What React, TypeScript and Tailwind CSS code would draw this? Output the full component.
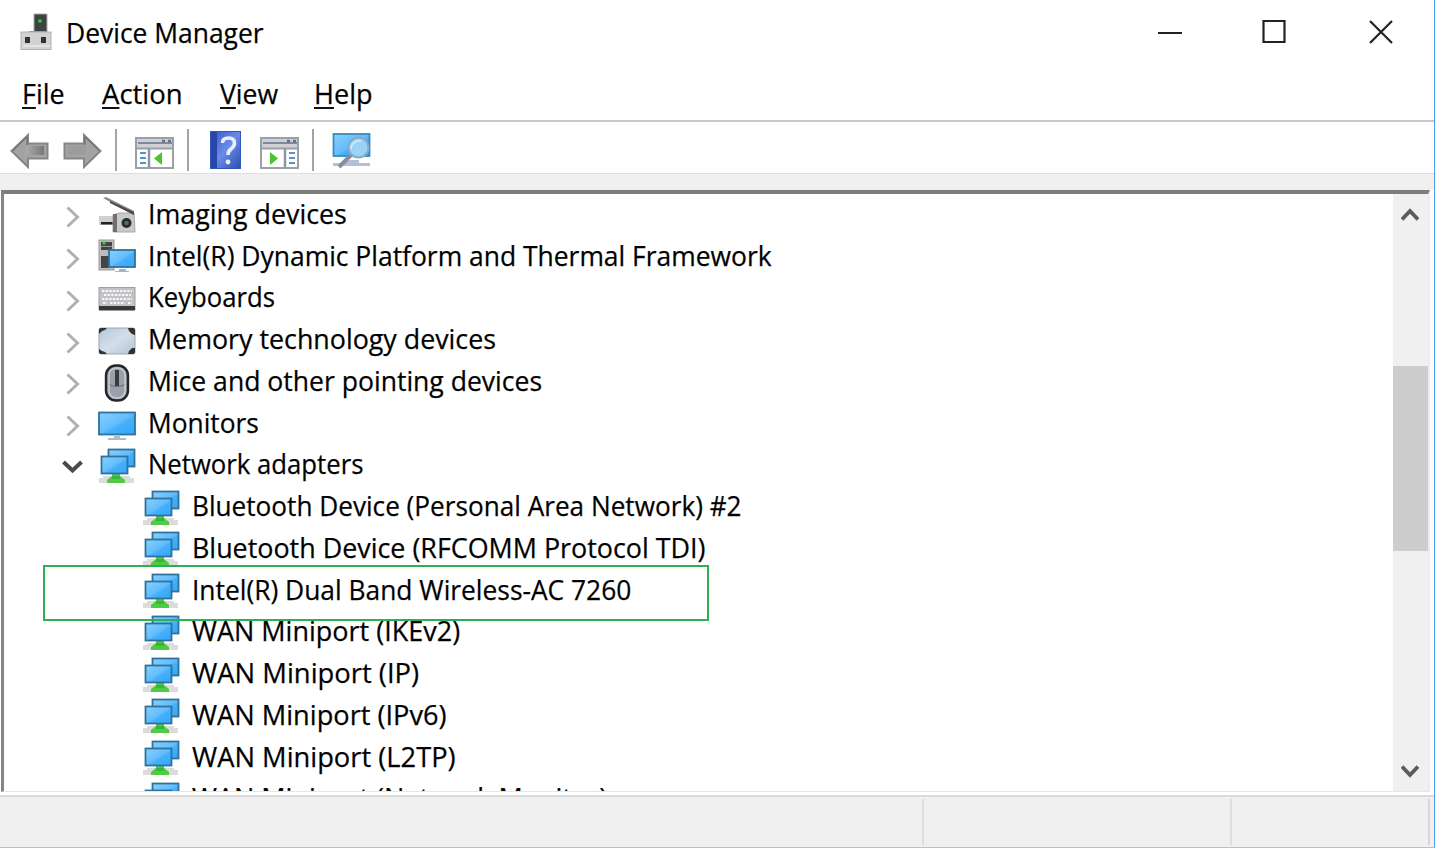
import { useLayoutEffect, useRef, useState } from 'react'
import type { ReactNode } from 'react'
import { clsx } from 'clsx'

type IconName = 'imaging' | 'platform' | 'keyboard' | 'memory' | 'mouse' | 'monitor' | 'network'

type Device = {
  label: string
  width: number
  icon: IconName
  child?: boolean
  open?: boolean
  marked?: boolean
}

const devices: Device[] = [
  { label: 'Imaging devices', width: 199, icon: 'imaging' },
  { label: 'Intel(R) Dynamic Platform and Thermal Framework', width: 624, icon: 'platform' },
  { label: 'Keyboards', width: 127, icon: 'keyboard' },
  { label: 'Memory technology devices', width: 348, icon: 'memory' },
  { label: 'Mice and other pointing devices', width: 394, icon: 'mouse' },
  { label: 'Monitors', width: 111, icon: 'monitor' },
  { label: 'Network adapters', width: 215, icon: 'network', open: true },
  { label: 'Bluetooth Device (Personal Area Network) #2', width: 550, icon: 'network', child: true },
  { label: 'Bluetooth Device (RFCOMM Protocol TDI)', width: 514, icon: 'network', child: true },
  { label: 'Intel(R) Dual Band Wireless-AC 7260', width: 439, icon: 'network', child: true, marked: true },
  { label: 'WAN Miniport (IKEv2)', width: 268, icon: 'network', child: true },
  { label: 'WAN Miniport (IP)', width: 227, icon: 'network', child: true },
  { label: 'WAN Miniport (IPv6)', width: 255, icon: 'network', child: true },
  { label: 'WAN Miniport (L2TP)', width: 264, icon: 'network', child: true },
  { label: 'WAN Miniport (Network Monitor)', width: 415, icon: 'network', child: true },
]

const menus = [
  { label: 'File', width: 43, gap: 'mr-[37px]' },
  { label: 'Action', width: 81, gap: 'mr-[37px]' },
  { label: 'View', width: 58, gap: 'mr-[36px]' },
  { label: 'Help', width: 59, gap: '' },
]

// Squeezes its text horizontally so that it takes exactly `width` pixels
function Label({ width, children }: { width: number; children: ReactNode }) {
  const ref = useRef<HTMLSpanElement>(null)
  const [scale, setScale] = useState(1)

  useLayoutEffect(() => {
    if (ref.current) setScale(width / ref.current.offsetWidth)
  }, [width])

  return (
    <span className="block shrink-0 whitespace-nowrap" style={{ width }}>
      <span ref={ref} className="inline-block origin-left" style={{ transform: `scaleX(${scale})` }}>
        {children}
      </span>
    </span>
  )
}

function NetworkIcon() {
  return (
    <>
      <path d="M1 30h35v5H1zM5 28h27v2H5z" fill="#dcdcdc" />
      <path d="M9 35v-3l5-4v-3h8v3l5 4v3z" fill="#4fcb43" />
      <path d="M14 28h8v3h-8z" fill="#38b53c" />
      <rect x="10.5" y="1.5" width="26" height="17" fill="url(#screen)" stroke="#2f729b" strokeWidth="1.8" />
      <rect x="3.5" y="8.5" width="26" height="17" fill="url(#screen)" stroke="#2f729b" strokeWidth="1.8" />
    </>
  )
}

function DeviceIcon({ name }: { name: IconName }) {
  return (
    <svg className="mt-[1px] h-[38px] w-[38px] shrink-0" viewBox="0 0 38 38">
      {name === 'imaging' && (
        <>
          <path d="M1 19h15v9H1z" fill="#d0d0d0" />
          <path d="M3 25h12v2.5H3z" fill="#222" />
          <path d="M15 18l6-2h15l1 19H15z" fill="#c9c9c9" stroke="#aaa" />
          <path d="M15 17h4v18h-4z" fill="#707070" />
          <path d="M5 1l3-1 28 14v4z" fill="#8a8a8a" />
          <path d="M12 4l24 11v3L12 6z" fill="#4a4a4a" />
          <circle cx="28.5" cy="26" r="5" fill="#2b2b2b" />
          <circle cx="28.5" cy="26" r="2.2" fill="#3d7573" />
        </>
      )}
      {name === 'platform' && (
        <>
          <rect x="1" y="1" width="15" height="30" fill="#bcbcbc" stroke="#999" />
          <path d="M3 3h11v8H3zM3 17h8v12H3z" fill="#444" />
          <path d="M3 7h11v1H3z" fill="#999" />
          <circle cx="6" cy="4" r="1.7" fill="#34cc43" />
          <rect x="11" y="11" width="26" height="17" fill="url(#screen)" stroke="#2f729b" strokeWidth="1.8" />
          <path d="M21 30h7v2h3v1H17v-1h4z" fill="#9ab8d5" />
        </>
      )}
      {name === 'keyboard' && (
        <>
          <rect x="1" y="6.5" width="36" height="22" fill="#c0c2c5" stroke="#a0a0a0" />
          <path d="M1 25h36v4.500H1z" fill="#383838" />
          <path
            d="M4 10h30M6 14h27M4 18h30M5 22h4m3 0h15m3 0h4"
            stroke="#f7f7f7"
            strokeWidth="2.2"
            strokeDasharray="2.4 1.2"
          />
        </>
      )}
      {name === 'memory' && (
        <>
          <rect x="1" y="5" width="36" height="26" rx="2" fill="url(#chip)" stroke="#9aa7b5" />
          <path
            d="M1 11V7q0-2 2-2h6L7 7 4 8zM30 5h5q2 0 2 2v5l-3-1-3-3zM1 26v3q0 2 2 2h6l-2-2-3-1zM37 25v4q0 2-2 2h-5l1-3 3-3z"
            fill="#333"
          />
        </>
      )}
      {name === 'mouse' && (
        <>
          <rect x="8" y="1.5" width="22" height="35" rx="10" fill="#98a1ab" stroke="#262626" strokeWidth="2.4" />
          <path d="M10 20q9 5 18 0" stroke="#6b747e" strokeWidth="1.2" fill="none" />
          <rect x="11" y="4" width="16" height="30" rx="7" fill="none" stroke="#c9cdd1" strokeWidth="1.5" />
          <path d="M17 6h4v16h-4z" fill="#3b3b3b" />
        </>
      )}
      {name === 'monitor' && (
        <>
          <rect x="1" y="6.5" width="36" height="22" fill="url(#screen)" stroke="#2f729b" strokeWidth="1.8" />
          <path d="M16 30h6v2h6v2H10v-2h6z" fill="#a9bdcf" />
        </>
      )}
      {name === 'network' && <NetworkIcon />}
    </svg>
  )
}

function Row({ device }: { device: Device }) {
  return (
    <div
      className={clsx(
        'relative flex h-[41.75px] shrink-0 items-center',
        device.child ? 'pl-[138px]' : 'pl-[58px]',
      )}
    >
      {!device.child && (
        <svg className="mt-[3px] mr-[15px] h-[22px] w-[21px] shrink-0" viewBox="0 0 21 22" fill="none">
          {device.open ? (
            <path d="M1.5 5l9 8.500L19.500 5" stroke="#4a4a4a" strokeWidth="4" />
          ) : (
            <path d="M5.5 1.500l10 9.500-10 9.500" stroke="#b0b0b0" strokeWidth="3" />
          )}
        </svg>
      )}
      <DeviceIcon name={device.icon} />
      <div className={clsx('pb-[4px]', device.child ? 'pl-[11.5px]' : 'pl-[12px]')}>
        <Label width={device.width}>{device.label}</Label>
      </div>
      {device.marked && (
        <div className="absolute top-[-6px] left-[39px] z-10 h-[56px] w-[666px] border-2 border-[#2bb153]" />
      )}
    </div>
  )
}

function Arrow({ flip }: { flip?: boolean }) {
  return (
    <svg className={clsx('h-[36px] w-[39px] shrink-0', flip && '-scale-x-100')} viewBox="0 0 39 36">
      <path d="M1.5 18L18 2v8.500h19.500v15H18V34z" fill="#a3a3a3" stroke="#868686" strokeWidth="2" />
      <path d="M16 13h18v9H16z" fill={flip ? '#9c9c9c' : 'url(#shaft)'} />
      <path d="M3 18L17 4v8" fill="none" stroke="#666" strokeWidth="1" />
    </svg>
  )
}

function PaneIcon({ right }: { right?: boolean }) {
  return (
    <svg className="h-[32px] w-[39px] shrink-0" viewBox="0 0 39 32">
      <rect x="1" y="1" width="37" height="30" fill="#fff" stroke="#9b9fa6" strokeWidth="2" />
      <path d="M2 2h35v9H2z" fill="#cdd0d4" />
      <path d="M3 6h34" stroke="#7d899d" strokeWidth="2" />
      <path d="M27 4h3m3 0h3" stroke="#667083" strokeWidth="2.5" />
      <path d="M2 11.5h35" stroke="#989fa9" strokeWidth="2" />
      {right ? (
        <>
          <path d="M25 12v18" stroke="#8d96a3" strokeWidth="2.5" />
          <path d="M29 16h6m-6 5h6m-6 5h6" stroke="#5b93c9" strokeWidth="2" />
          <path d="M10 15v13l8-6.500z" fill="#4ac42c" />
        </>
      ) : (
        <>
          <path d="M14 12v18" stroke="#8d96a3" strokeWidth="2.5" />
          <path d="M5 16h6m-6 5h6m-6 5h6" stroke="#5b93c9" strokeWidth="2" />
          <path d="M27 15v13l-8-6.500z" fill="#4ac42c" />
        </>
      )}
    </svg>
  )
}

function Separator({ className }: { className?: string }) {
  return <div className={clsx('h-[42px] w-[2px] shrink-0', className)} />
}

function TitleBar() {
  return (
    <header className="flex h-[66px] shrink-0 items-start">
      <svg className="mt-[13px] ml-[20px] h-[38px] w-[32px]" viewBox="0 0 32 38">
        <path d="M14 1h13v18H14z" fill="#3c4340" stroke="#aaa" />
        <circle cx="20" cy="8" r="1.8" fill="#35d344" />
        <path d="M9 18h16v2H9z" fill="#888" />
        <rect x="1" y="19" width="30" height="17.5" fill="#d2d2d2" stroke="#b0b0b0" />
        <path d="M5 24h5v6H5zM21 24h5v6h-5z" fill="#333" />
        <path d="M3 33h27" stroke="#e4e4e4" strokeWidth="2" />
      </svg>
      <div className="mt-[15px] ml-[14px]">
        <Label width={198}>Device Manager</Label>
      </div>
      <svg
        className="mt-[19px] mr-[-1px] ml-auto h-[26px] w-[277px]"
        viewBox="0 0 277 26"
        fill="none"
        stroke="#222"
        strokeWidth="2.2"
      >
        <path d="M1 14h24M106.5 2h21v21h-21zM213 2l22 22m0-22l-22 22" />
      </svg>
      <div className="w-px shrink-0" />
    </header>
  )
}

function MenuBar() {
  return (
    <nav className="flex h-[56px] shrink-0 items-start border-b-2 border-[#c8c8c8] pt-[10px] pl-[22px]">
      {menus.map(menu => (
        <div key={menu.label} className={menu.gap}>
          <Label width={menu.width}>
            <span className="underline decoration-2 underline-offset-[3px]">{menu.label[0]}</span>
            {menu.label.slice(1)}
          </Label>
        </div>
      ))}
    </nav>
  )
}

function Toolbar() {
  return (
    <div className="flex h-[51px] shrink-0 items-start pt-[7px] pl-[10px]">
      <div className="mt-[4px] flex gap-[14px]">
        <Arrow />
        <Arrow flip />
      </div>
      <Separator className="ml-[13px] bg-[#9eaa9e]" />
      <div className="mt-[8px] ml-[18px]">
        <PaneIcon />
      </div>
      <Separator className="ml-[13px] bg-[#a4a4a4]" />
      {/* Help book */}
      <div className="mt-[2px] ml-[21px] flex h-[38px] w-[31px] shrink-0 border border-[#3156bc] bg-linear-to-br from-[#3158c8] via-[#6a8be8] to-[#2f4fae]">
        <div className="w-[6px] shrink-0 bg-[#2746a8]" />
        <svg className="h-[36px] w-[23px]" viewBox="0 0 23 36" fill="none" stroke="#e9edf9">
          <path d="M5.5 11q0-5 6-5 6 0 6 5 0 3.500-3.500 6-3 2.500-3 6" strokeWidth="3.6" />
          <circle cx="11" cy="30" r="1.2" strokeWidth="2.4" />
        </svg>
      </div>
      <div className="mt-[8px] ml-[19px]">
        <PaneIcon right />
      </div>
      <Separator className="ml-[13px] bg-[#ab9da9]" />
      <svg className="mt-[3px] ml-[18px] h-[38px] w-[40px]" viewBox="0 0 40 38">
        <path d="M1 31h37v3H1zM12 28h15v3H12z" fill="#b4c1d5" />
        <rect x="1.5" y="2" width="36" height="22" fill="url(#screen)" stroke="#3a8bb7" strokeWidth="1.8" />
        <path d="M7 35L20 22" stroke="#858e99" strokeWidth="4" />
        <circle cx="26.5" cy="15.5" r="10" fill="#9bd2f7" stroke="#87aac7" strokeWidth="2" />
        <path d="M19 17a8 8 0 0 1 10-8" fill="none" stroke="#c8e8fc" strokeWidth="2" />
      </svg>
    </div>
  )
}

function ScrollBar() {
  return (
    <div className="flex w-[35px] shrink-0 flex-col items-center bg-[#f0f0f0]">
      <svg className="mt-[12px] mr-[1px] h-[16px] w-[18px] shrink-0" viewBox="0 0 18 16" fill="none">
        <path d="M1 13.5l8-8.500 8 8.500" stroke="#5c5c5c" strokeWidth="3.8" />
      </svg>
      <div className="mt-[144px] h-[185px] w-full shrink-0 bg-[#cdcdcd]" />
      <svg className="mt-auto mr-[1px] mb-[11px] h-[16px] w-[18px] shrink-0" viewBox="0 0 18 16" fill="none">
        <path d="M1 2.5l8 8.500 8-8.500" stroke="#5c5c5c" strokeWidth="3.8" />
      </svg>
    </div>
  )
}

function StatusBar() {
  return (
    <footer className="flex h-[52px] shrink-0 border-t-2 border-[#dadada] bg-[#f0f0f0] pt-[2px] pb-[2px]">
      <div className="w-[924px] border-r-2 border-[#dedede]" />
      <div className="w-[308px] border-r-2 border-[#dedede]" />
      <div className="w-[198px] border-r-2 border-[#d6d6d6]" />
    </footer>
  )
}

export default function App() {
  return (
    <div className="flex h-[848px] w-[1435px] flex-col overflow-hidden border-r border-b border-r-[#4f9fe8] border-b-[#a9c4dc] bg-white font-['Open_Sans',sans-serif] text-[27.5px] leading-[36px] text-black [-webkit-text-stroke:0.25px_#111]">
      {/* Shared fills for the icons */}
      <svg className="absolute h-0 w-0">
        <defs>
          <linearGradient id="screen" x1="0" y1="0" x2="1" y2="1">
            <stop offset="0" stopColor="#8ad0ff" />
            <stop offset=".5" stopColor="#62bdfc" />
            <stop offset=".58" stopColor="#46b0fa" />
            <stop offset="1" stopColor="#32a6f9" />
          </linearGradient>
          <linearGradient id="chip" x1="0" y1="0" x2="1" y2="1">
            <stop offset="0" stopColor="#b5c7da" />
            <stop offset=".5" stopColor="#d3dee9" />
            <stop offset="1" stopColor="#b4c3d3" />
          </linearGradient>
          <linearGradient id="shaft">
            <stop offset="0" stopColor="#aaa" />
            <stop offset="1" stopColor="#777" />
          </linearGradient>
        </defs>
      </svg>

      <TitleBar />
      <MenuBar />
      <Toolbar />
      <div className="h-[17px] shrink-0 border-t border-[#dedede] bg-[#f0f0f0]" />

      {/* Device tree */}
      <main className="mr-[4px] ml-[1px] flex h-[602px] shrink-0 border-t-4 border-r-2 border-b border-l-[3px] border-t-[#788078] border-r-[#ececec] border-b-[#e6e6e6] border-l-[#858585]">
        <div className="flex flex-1 flex-col overflow-hidden pt-[1px]">
          {devices.map(device => (
            <Row key={device.label} device={device} />
          ))}
        </div>
        <ScrollBar />
      </main>
      <div className="h-[3px] shrink-0" />
      <StatusBar />
    </div>
  )
}
